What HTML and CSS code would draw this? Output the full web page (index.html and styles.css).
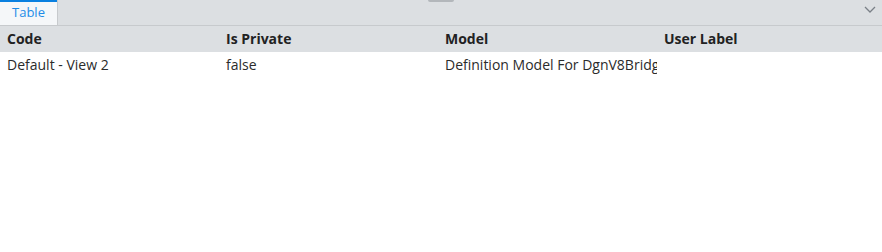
FILE: index.html
```html
<!DOCTYPE html>
<html lang="en">
<head>
  <meta charset="UTF-8">
  <title>Table</title>
  <link rel="stylesheet" href="styles.css">
</head>
<body>
  <div class="tabbar">
    <div class="tab active">Table</div>
    <div class="handle"></div>
    <svg class="chevron" width="12" height="7" viewBox="0 0 12 7">
      <path d="M1 1 L6 6 L11 1" fill="none" stroke="#7a8087" stroke-width="1.3"/>
    </svg>
  </div>
  <div class="grid">
    <div class="row header">
      <div class="cell">Code</div>
      <div class="cell">Is Private</div>
      <div class="cell">Model</div>
      <div class="cell">User Label</div>
    </div>
    <div class="row">
      <div class="cell">Default - View 2</div>
      <div class="cell">false</div>
      <div class="cell">Definition Model For DgnV8Bridge</div>
      <div class="cell"></div>
    </div>
  </div>
</body>
</html>
```
FILE: styles.css
```css
body {
  margin: 0;
  font-family: 'Open Sans', sans-serif;
  font-size: 14px;
  color: #2b2b2b;
  background: #fff;
}
.tabbar {
  position: relative;
  display: flex;
  height: 25px;
  background: #dcdfe2;
  border-bottom: 1px solid #c7cacd;
}
.tab {
  width: 57px;
  border-right: 1px solid #c7cacd;
  background: #f5f7f9;
  color: #1e8ce8;
  text-align: center;
  line-height: 25px;
  font-size: 13px;
}
.tab.active {
  box-shadow: inset 0 2px 0 #0a80e0;
}
.handle {
  position: absolute;
  left: 428px;
  top: 0;
  width: 26px;
  height: 2px;
  background: #b3b7bb;
  border-radius: 0 0 2px 2px;
}
.chevron {
  position: absolute;
  right: 6px;
  top: 6px;
}
.row {
  display: grid;
  grid-template-columns: 219px 219px 219px 219px;
  height: 26px;
  line-height: 26px;
}
.row.header {
  background: #dcdfe2;
  font-weight: 700;
  color: #222;
}
.cell {
  padding-left: 7px;
  overflow: hidden;
  white-space: nowrap;
}
```
